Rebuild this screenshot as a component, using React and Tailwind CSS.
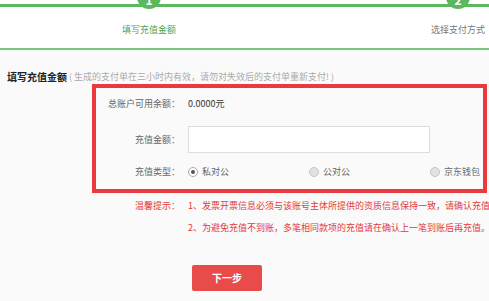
import React from "react";

const font = { fontFamily: '"Noto Sans CJK SC", "Noto Sans", sans-serif' };

function Step({ num, label, active }) {
  return (
    <div className="flex w-[80px] flex-col items-center">
      <div className="-mt-[15px] flex h-[24px] w-[24px] items-end justify-center rounded-full bg-[#5cb85c] pb-[3px] text-[12px] font-bold leading-none text-white">
        {num}
      </div>
      <div
        className={
          "mt-[15px] whitespace-nowrap text-[9px] leading-[12px] " +
          (active ? "text-[#52a352]" : "text-[#777]")
        }
      >
        {label}
      </div>
    </div>
  );
}

function Radio({ checked, label, wide }) {
  return (
    <label className={"flex shrink-0 items-center gap-[4px] " + (wide ? "w-[121px]" : "")}>
      <span
        className={
          "flex h-[10px] w-[10px] shrink-0 items-center justify-center rounded-full border " +
          (checked ? "border-[#aaa] bg-white" : "border-[#c4c4c4] bg-[#e2e2e2]")
        }
      >
        {checked && <span className="h-[4px] w-[4px] rounded-full bg-[#555]" />}
      </span>
      <span className="whitespace-nowrap text-[9px] text-[#666]">{label}</span>
    </label>
  );
}

export default function App() {
  return (
    <div className="h-[301px] w-[489px] overflow-hidden bg-[#fafafa]" style={font}>
      {/* 步骤条 */}
      <div className="relative h-[50px] overflow-hidden border-b-2 border-[#7cc67c] bg-white">
        <div className="absolute left-0 right-0 top-[4px] h-[3px] bg-[#5cb85c]" />
        <div className="relative flex">
          <div className="ml-[109px]">
            <Step num="1" label="填写充值金额" active />
          </div>
          <div className="ml-[229px]">
            <Step num="2" label="选择支付方式" />
          </div>
        </div>
      </div>

      <div className="pl-[7px]">
        <div className="mt-[20px] flex h-[14px] items-center whitespace-nowrap leading-[14px]">
          <span className="text-[10px] font-bold text-[#222]">填写充值金额</span>
          <span className="ml-[2px] text-[9px] text-[#aaa]">
            ( 生成的支付单在三小时内有效，请勿对失效后的支付单重新支付! )
          </span>
        </div>

        {/* 充值表单 */}
        <div className="ml-[85px] h-[109px] w-[395px] overflow-hidden border-4 border-[#e93a3d] pt-[9px]">
          <div className="flex h-[14px] items-center">
            <div className="w-[84px] shrink-0 whitespace-nowrap text-right text-[9px] text-[#666]">总账户可用余额：</div>
            <div className="ml-[8px] text-[9px] text-[#333]">0.0000元</div>
          </div>
          <div className="mt-[15px] flex h-[27px] items-center">
            <div className="w-[84px] shrink-0 whitespace-nowrap text-right text-[9px] text-[#666]">充值金额：</div>
            <input className="ml-[8px] h-[27px] w-[242px] border border-[#ddd] bg-white outline-none" />
          </div>
          <div className="mt-[12px] flex h-[14px] items-center">
            <div className="w-[84px] shrink-0 whitespace-nowrap text-right text-[9px] text-[#666]">充值类型：</div>
            <div className="ml-[8px] flex">
              <Radio checked wide label="私对公" />
              <Radio wide label="公对公" />
              <Radio label="京东钱包" />
            </div>
          </div>
        </div>

        {/* 温馨提示 */}
        <div className="ml-[89px] mt-[2px] flex text-[9px] leading-[22px] text-[#e4393c]">
          <div className="w-[84px] shrink-0 whitespace-nowrap text-right">温馨提示：</div>
          <div className="ml-[8px] whitespace-nowrap">
            <div>1、发票开票信息必须与该账号主体所提供的资质信息保持一致，请确认充值主体</div>
            <div>2、为避免充值不到账，多笔相同款项的充值请在确认上一笔到账后再充值。</div>
          </div>
        </div>

        <div className="ml-[185px] mt-[24px]">
          <button className="h-[26px] w-[70px] rounded-[2px] bg-[#e94b4b] text-[10px] font-bold text-white">
            下一步
          </button>
        </div>
      </div>
    </div>
  );
}
